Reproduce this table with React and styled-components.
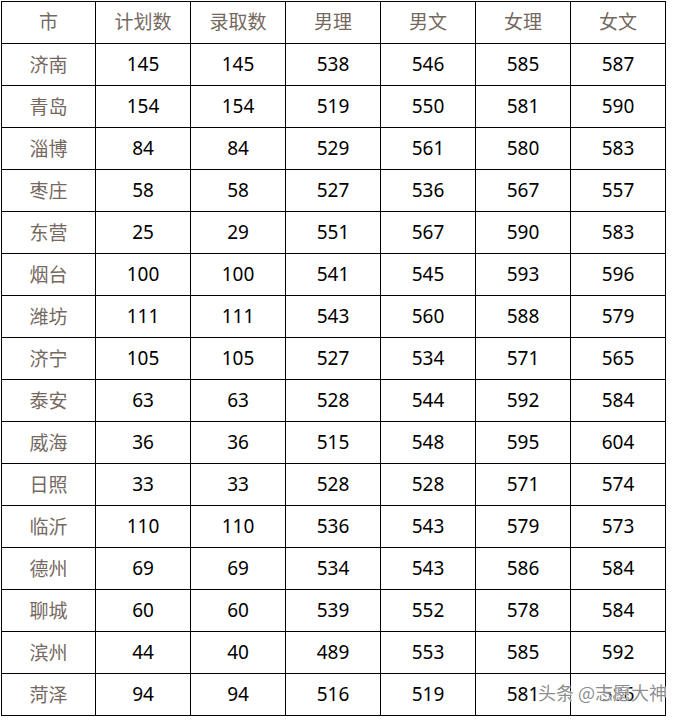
import React from "react";
import styled, { createGlobalStyle } from "styled-components";

const Global = createGlobalStyle`
  html, body { margin: 0; padding: 0; background: #fff; }
  body { width: 677px; height: 720px; overflow: hidden; }
`;

const Page = styled.div`
  position: relative;
  width: 677px;
  height: 720px;
  padding: 1px 0 0 1px;
  box-sizing: border-box;
`;

const Grid = styled.div`
  display: grid;
  grid-template-columns: 94px repeat(6, 95px);
  grid-auto-rows: 42px;
  width: 665px;
  box-sizing: border-box;
  border-top: 1px solid #000;
  border-left: 1px solid #000;
`;

const Cell = styled.div`
  display: flex;
  align-items: center;
  justify-content: center;
  border-right: 1px solid #000;
  border-bottom: 1px solid #000;
  box-sizing: border-box;
  font-family: ${(p) => (p.$num ? '"Noto Sans", "Noto Sans CJK SC", sans-serif' : '"Noto Sans CJK SC", sans-serif')};
  font-size: 19px;
  line-height: 24px;
  color: ${(p) => (p.$num ? "#000" : "#75695f")};
  padding-bottom: ${(p) => (p.$head ? "4px" : "2px")};
`;

const Watermark = styled.div`
  position: absolute;
  left: 538px;
  top: 679px;
  font-family: "Noto Sans CJK SC", sans-serif;
  font-size: 18px;
  line-height: 26px;
  color: rgba(120, 120, 120, 0.85);
  text-shadow: 0 0 2px #fff, 0 0 2px #fff, 0 0 1px #fff;
  white-space: nowrap;
`;

const header = ["市", "计划数", "录取数", "男理", "男文", "女理", "女文"];
const rows = [
  ["济南", 145, 145, 538, 546, 585, 587],
  ["青岛", 154, 154, 519, 550, 581, 590],
  ["淄博", 84, 84, 529, 561, 580, 583],
  ["枣庄", 58, 58, 527, 536, 567, 557],
  ["东营", 25, 29, 551, 567, 590, 583],
  ["烟台", 100, 100, 541, 545, 593, 596],
  ["潍坊", 111, 111, 543, 560, 588, 579],
  ["济宁", 105, 105, 527, 534, 571, 565],
  ["泰安", 63, 63, 528, 544, 592, 584],
  ["威海", 36, 36, 515, 548, 595, 604],
  ["日照", 33, 33, 528, 528, 571, 574],
  ["临沂", 110, 110, 536, 543, 579, 573],
  ["德州", 69, 69, 534, 543, 586, 584],
  ["聊城", 60, 60, 539, 552, 578, 584],
  ["滨州", 44, 40, 489, 553, 585, 592],
  ["菏泽", 94, 94, 516, 519, 581, 586],
];

export default function App() {
  return (
    <>
      <Global />
      <Page>
        <Grid>
          {header.map((h) => (
            <Cell key={h} $head>
              {h}
            </Cell>
          ))}
          {rows.map((r) =>
            r.map((v, i) => (
              <Cell key={r[0] + i} $num={i > 0}>
                {v}
              </Cell>
            ))
          )}
        </Grid>
        <Watermark>头条 @志愿大神</Watermark>
      </Page>
    </>
  );
}
